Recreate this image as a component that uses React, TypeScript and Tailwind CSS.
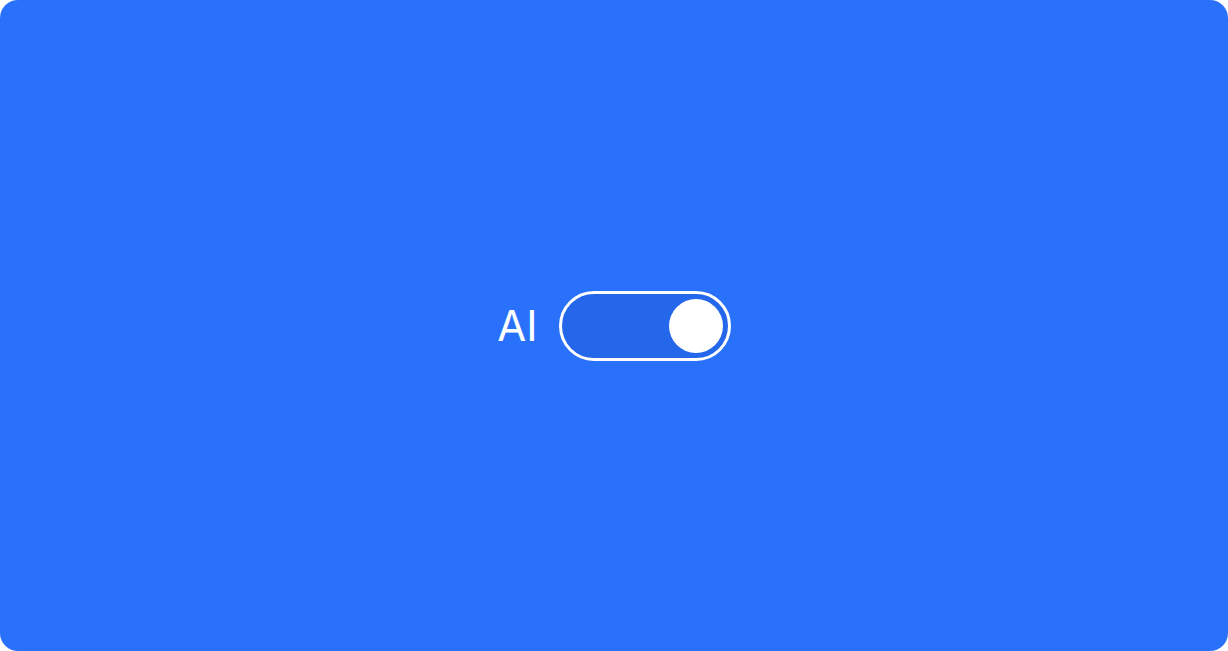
import React from "react";

export default function App() {
  return (
    <div className="w-full h-screen bg-white">
      <div className="w-full h-full rounded-[18px] bg-[#2971fa] flex items-center justify-center">
        <div className="flex items-center gap-[21px]">
          <span
            className="text-white text-[42px] leading-none font-normal"
            style={{ fontFamily: "Inter, 'Noto Sans', sans-serif" }}
          >
            AI
          </span>
          <button
            type="button"
            className="w-[172px] h-[70px] rounded-full border-[3px] border-white bg-[#2467ea] flex items-center justify-end pr-[5px]"
          >
            <span className="block w-[54px] h-[54px] rounded-full bg-white" />
          </button>
        </div>
      </div>
    </div>
  );
}
